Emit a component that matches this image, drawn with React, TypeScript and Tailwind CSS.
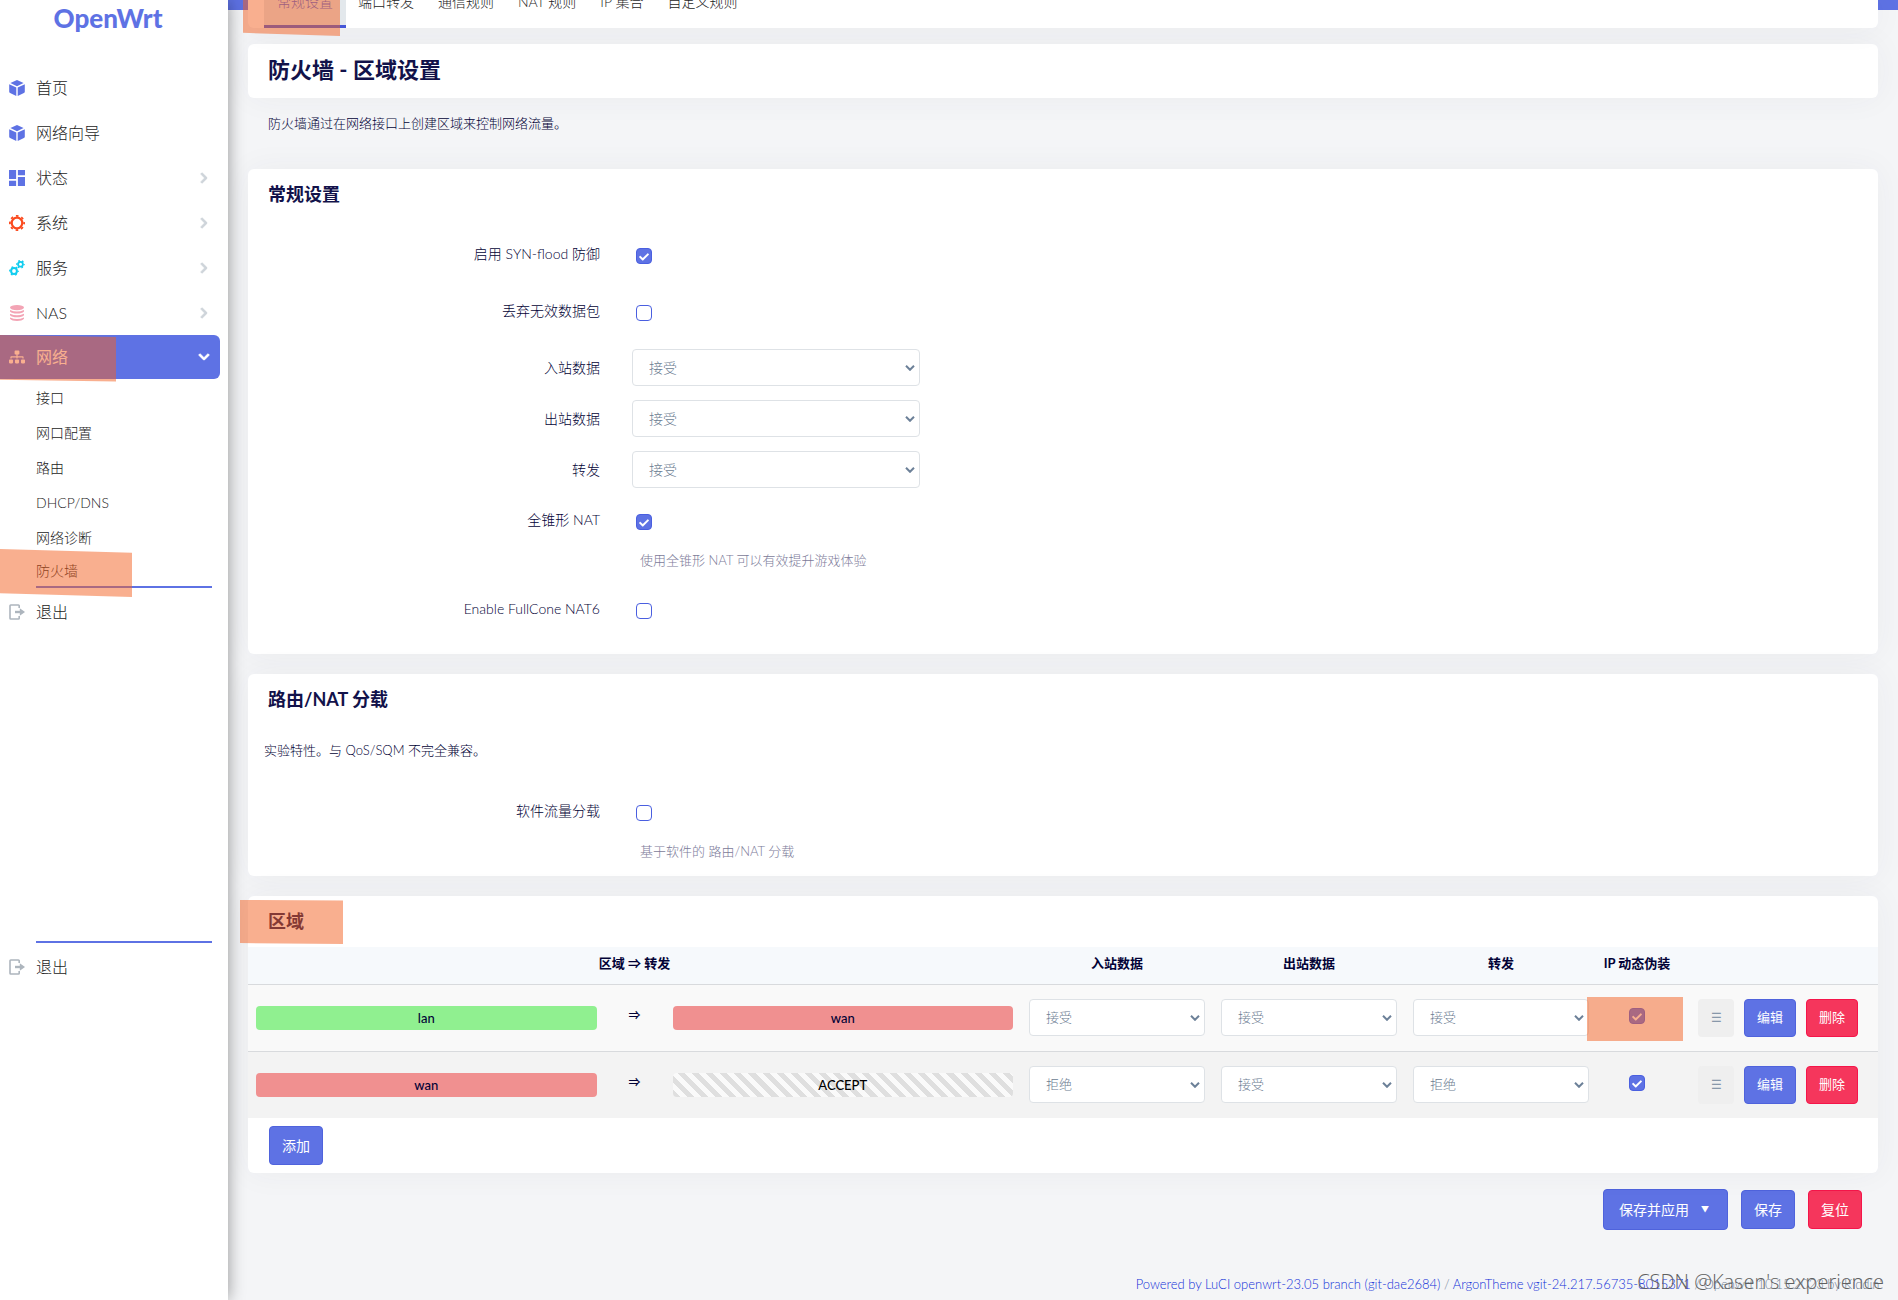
import { ReactNode } from "react";
import { FaCheck, FaChevronDown, FaChevronRight, FaSitemap } from "react-icons/fa";
import { MdDashboard } from "react-icons/md";

function CubeIcon() {
  return (
    <svg viewBox="0 0 16 16" className="size-4 fill-[#5e72e4]">
      <path d="M8 0 14.600 3.100 8 6.300 1.400 3.100z" />
      <path d="M.2 4.200 7.300 7.600V16L1.100 13.100Q.2 12.700.2 11.700z" />
      <path d="M15.800 4.200 8.700 7.600V16l6.200-2.900q.9-.4.9-1.400z" />
    </svg>
  );
}

function GearIcon() {
  return (
    <svg viewBox="0 0 16 16" className="size-4 fill-none stroke-[#fb4a1e]">
      <circle cx="8" cy="8" r="5.300" strokeWidth="2.200" />
      <circle cx="8" cy="8" r="7.100" strokeWidth="1.800" strokeDasharray="2.600 2.976" strokeDashoffset="1.300" />
    </svg>
  );
}

function GearsIcon() {
  return (
    <svg viewBox="0 0 16 16" className="size-4 fill-none stroke-[#11cdef]">
      <circle cx="5" cy="11" r="2.900" strokeWidth="2" />
      <circle cx="5" cy="11" r="4.200" strokeWidth="1.400" strokeDasharray="1.800 2.598" strokeDashoffset="0.900" />
      <circle cx="11.500" cy="4.300" r="2.400" strokeWidth="1.800" />
      <circle cx="11.500" cy="4.300" r="3.600" strokeWidth="1.400" strokeDasharray="1.600 2.170" strokeDashoffset="0.800" />
    </svg>
  );
}

function DisksIcon() {
  return (
    <svg viewBox="0 0 16 16" className="size-4 fill-[#f3a4b5]">
      <ellipse cx="8" cy="2.600" rx="7" ry="2.600" />
      <path d="M1 5q7 3 14 0v1.500q-2 2-7 2t-7-2z" />
      <path d="M1 8.700q7 3 14 0v1.500q-2 2-7 2t-7-2z" />
      <path d="M1 12.400q7 3 14 0v1.400q-2 2.200-7 2.200t-7-2.200z" />
    </svg>
  );
}

function LogoutIcon() {
  return (
    <svg viewBox="0 0 16 16" className="size-4 fill-none stroke-[#adb5bd]">
      <path d="M10.200 4V1.800Q10.200 1 9.400 1H1.800Q1 1 1 1.800v12.400q0 .8.8.8h7.600q.8 0 .8-.8V12" strokeWidth="1.600" />
      <path d="M6 8h5" strokeWidth="2.400" />
      <path d="M10.800 4.200 16 8l-5.200 3.800z" className="fill-[#adb5bd] stroke-none" />
    </svg>
  );
}

// translucent marker stroke, slightly skewed like a hand drawn one
function Marker({ className, points }: { className: string; points: string }) {
  return (
    <svg
      viewBox="0 0 100 100"
      preserveAspectRatio="none"
      aria-hidden="true"
      className={`pointer-events-none absolute z-30 fill-[#f35f1f]/50 ${className}`}
    >
      <polygon points={points} />
    </svg>
  );
}

const menu: { label: string; icon: ReactNode; expandable?: boolean }[] = [
  { label: "首页", icon: <CubeIcon /> },
  { label: "网络向导", icon: <CubeIcon /> },
  {
    label: "状态",
    icon: <MdDashboard viewBox="3 3 18 18" className="size-4 text-[#5e72e4]" />,
    expandable: true,
  },
  { label: "系统", icon: <GearIcon />, expandable: true },
  { label: "服务", icon: <GearsIcon />, expandable: true },
  { label: "NAS", icon: <DisksIcon />, expandable: true },
];

const submenu = ["接口", "网口配置", "路由", "DHCP/DNS", "网络诊断", "防火墙"];

const tabs = ["常规设置", "端口转发", "通信规则", "NAT 规则", "IP 集合", "自定义规则"];

const policies = ["接受", "拒绝", "丢弃"];

const zones = [
  {
    name: "lan",
    color: "bg-[#90f090]",
    target: "wan",
    targetColor: "bg-[#f09090]",
    rowColor: "bg-[#f9f9f9]",
    input: "接受",
    output: "接受",
    forward: "接受",
    marked: true,
  },
  {
    name: "wan",
    color: "bg-[#f09090]",
    target: "ACCEPT",
    targetColor:
      "text-black bg-[repeating-linear-gradient(45deg,#dfdfdf_0,#dfdfdf_5px,#fafafa_5px,#fafafa_10px)]",
    rowColor: "bg-[#f3f3f3]",
    input: "拒绝",
    output: "接受",
    forward: "拒绝",
    marked: false,
  },
];

function LogoutLink() {
  return (
    <a href="#logout" className="flex h-11 items-center gap-[11px] pl-[9px] text-base">
      <LogoutIcon />
      <span>退出</span>
    </a>
  );
}

function Sidebar() {
  return (
    <aside className="relative z-20 w-57 shrink-0 bg-white text-[#1c1c1c] shadow-[0_0_16px_rgba(0,0,0,0.4)]">
      <a
        href="#home"
        className="flex h-16 justify-center pr-3 text-[26px] leading-9 font-black text-[#5e72e4]"
      >
        OpenWrt
      </a>
      <ul className="mt-0.5">
        {menu.map((item) => (
          <li key={item.label}>
            <a href="#menu" className="mb-px flex h-11 items-center gap-[11px] pr-[18px] pl-[9px] text-base">
              {item.icon}
              <span className="grow">{item.label}</span>
              {item.expandable && (
                <FaChevronRight className="size-3 stroke-[#ced4da] stroke-[40px] text-[#ced4da]" />
              )}
            </a>
          </li>
        ))}
        <li className="-mt-px">
          <a
            href="#network"
            className="relative mr-2 flex h-11 items-center gap-[11px] rounded-r-md bg-[#5e72e4] pr-2.5 pl-[9px] text-base font-normal text-white"
          >
            <FaSitemap className="size-4" />
            <span className="grow">网络</span>
            <FaChevronDown className="size-3 stroke-white stroke-[40px]" />
            <Marker className="top-0 left-0 h-12 w-29" points="0,0 100,4 100,97 0,93" />
          </a>
          <ul className="pt-px">
            {submenu.map((label) => (
              <li key={label} className="relative pr-4 pl-9">
                <a
                  href="#sub"
                  className={
                    label === "防火墙"
                      ? "mb-0.5 flex h-[33px] items-center border-b-2 border-[#5e72e4] text-sm"
                      : "flex h-[35px] items-center text-sm"
                  }
                >
                  {label}
                </a>
                {label === "防火墙" && (
                  <Marker className="-top-1.5 left-0 h-12 w-33" points="0,0 100,8 100,100 0,92" />
                )}
              </li>
            ))}
          </ul>
        </li>
      </ul>
      <LogoutLink />
      <div className="mt-[307px] mr-4 ml-9 border-b-2 border-[#5e72e4]" />
      <div className="pt-0.5">
        <LogoutLink />
      </div>
    </aside>
  );
}

function Checkbox({ id, checked, label }: { id: string; checked?: boolean; label?: string }) {
  return (
    <span className="relative block size-4">
      <input
        id={id}
        type="checkbox"
        aria-label={label}
        defaultChecked={checked}
        className="peer block size-4 appearance-none rounded border border-[#4a5fe0] bg-white checked:bg-[#5e72e4]"
      />
      <FaCheck className="pointer-events-none absolute top-1 left-[3px] hidden size-2.5 text-white peer-checked:block" />
    </span>
  );
}

function Select({ id, value, label, small }: { id: string; value: string; label?: string; small?: boolean }) {
  return (
    <span className="relative block">
      <select
        id={id}
        aria-label={label}
        defaultValue={value}
        className={`block h-[37px] w-full appearance-none rounded border border-[#dee2e6] bg-white pr-6 pl-4 text-[#6b7c91] ${small ? "text-[13px]" : "text-sm"}`}
      >
        {policies.map((policy) => (
          <option key={policy}>{policy}</option>
        ))}
      </select>
      <svg
        viewBox="0 0 10 6"
        className="pointer-events-none absolute top-4 right-[5px] h-1.5 w-2.5 fill-none stroke-[#6c8098] stroke-2"
      >
        <path d="m1 .8 4 4 4-4" />
      </svg>
    </span>
  );
}

function CheckRow({ id, label, checked, hint }: { id: string; label: string; checked?: boolean; hint?: string }) {
  return (
    <div className={hint ? "flex h-[89px]" : "flex h-[57px]"}>
      <label htmlFor={id} className="w-88 pt-4 text-right leading-5">
        {label}
      </label>
      <div className="pt-5 pl-9">
        <Checkbox id={id} checked={checked} />
        {hint && <p className="mt-5 pl-1 text-[13px] leading-5 text-[#7c7b99]">{hint}</p>}
      </div>
    </div>
  );
}

function SelectRow({ id, label, value }: { id: string; label: string; value: string }) {
  return (
    <div className="flex h-[51px] items-center">
      <label htmlFor={id} className="w-88 text-right leading-5">
        {label}
      </label>
      <div className="w-80 pl-8">
        <Select id={id} value={value} />
      </div>
    </div>
  );
}

function Card({ title, children, className = "" }: { title: string; children: ReactNode; className?: string }) {
  return (
    <section className={`rounded-md bg-white shadow-[0_0_32px_rgba(60,60,70,0.05)] ${className}`}>
      <h3 className="h-[51px] px-5 text-lg leading-[50px] font-bold text-[#12124a]">{title}</h3>
      {children}
    </section>
  );
}

function ZoneTable() {
  return (
    <table className="w-full table-fixed text-[13px]">
      <colgroup>
        <col />
        <col className="w-48" />
        <col className="w-48" />
        <col className="w-48" />
        <col className="w-20" />
        <col className="w-[201px]" />
      </colgroup>
      <thead>
        <tr className="h-[37px] border-b border-[#d8dadd] bg-[#f6f9fc]">
          <th className="pb-1">区域 ⇒ 转发</th>
          <th className="pb-1">入站数据</th>
          <th className="pb-1">出站数据</th>
          <th className="pb-1">转发</th>
          <th className="pb-1 whitespace-nowrap">IP 动态伪装</th>
          <th className="pb-1" />
        </tr>
      </thead>
      <tbody>
        {zones.map((zone) => (
          <tr key={zone.name} className={`h-[67px] border-b border-[#d8dadd] last:border-b-0 ${zone.rowColor}`}>
            <td className="px-2">
              <div className="flex text-center leading-6 font-medium">
                <div className={`flex-1 rounded ${zone.color}`}>{zone.name}</div>
                <div className="w-19 text-xs leading-5">⇒</div>
                <div className={`flex-1 rounded ${zone.targetColor}`}>{zone.target}</div>
              </div>
            </td>
            <td className="px-2">
              <Select small id={`${zone.name}-input`} value={zone.input} label="入站数据" />
            </td>
            <td className="px-2">
              <Select small id={`${zone.name}-output`} value={zone.output} label="出站数据" />
            </td>
            <td className="px-2">
              <Select small id={`${zone.name}-forward`} value={zone.forward} label="转发" />
            </td>
            <td className="relative">
              <div className="flex justify-center pb-1">
                <Checkbox id={`${zone.name}-masq`} checked label="IP 动态伪装" />
              </div>
              {zone.marked && (
                <Marker className="top-3 -left-2.5 h-11 w-24" points="0,0 100,0 100,100 0,100" />
              )}
            </td>
            <td>
              <div className="flex justify-end gap-2.5 pr-5">
                <button className="h-[38px] w-9 rounded bg-[#efefef] text-xs text-[#8898aa]">☰</button>
                <button className="h-[38px] w-13 rounded border border-[#4f63dc] bg-[#5e72e4] font-normal text-white">
                  编辑
                </button>
                <button className="h-[38px] w-13 rounded border border-[#f5154a] bg-[#f5365c] font-normal text-white">
                  删除
                </button>
              </div>
            </td>
          </tr>
        ))}
      </tbody>
    </table>
  );
}

export default function App() {
  return (
    <div className="flex min-h-screen bg-[#f4f5f7] font-['Lato','Noto_Sans_CJK_SC',sans-serif] text-sm font-light text-[#020236]">
      <Sidebar />
      <div className="relative min-w-0 grow px-5">
        <div className="absolute inset-x-0 top-0 h-2.5 bg-[#5e72e4]" />
        <nav className="relative flex h-7 items-end overflow-hidden rounded-b-md bg-white px-4 text-[#1c1c1c] shadow-[0_0_32px_rgba(60,60,70,0.05)]">
          {tabs.map((tab, i) => (
            <a
              key={tab}
              href="#tab"
              className={
                i === 0
                  ? "border-b-3 border-[#4557d8] bg-[#e3e8ec] px-[13px] pb-[13px] leading-5 text-[#4a5fe0]"
                  : "px-3 pb-4 leading-5"
              }
            >
              {tab}
            </a>
          ))}
        </nav>
        <Marker className="top-0 left-[15px] h-9 w-[97px]" points="0,0 100,0 100,100 0,91" />

        <main className="flex flex-col">
          <h2 className="mt-4 h-[54px] rounded-md bg-white px-5 text-[22px] leading-[52px] font-bold text-[#12124a] shadow-[0_0_32px_rgba(60,60,70,0.05)]">
            防火墙 - 区域设置
          </h2>
          <p className="mt-[15px] mb-9 px-5 text-[13px] leading-5">防火墙通过在网络接口上创建区域来控制网络流量。</p>

          <Card title="常规设置" className="pb-3.5">
            <form className="pt-2">
              <CheckRow id="syn-flood" label="启用 SYN-flood 防御" checked />
              <CheckRow id="drop-invalid" label="丢弃无效数据包" />
              <div className="-mb-px">
                <SelectRow id="input" label="入站数据" value="接受" />
                <SelectRow id="output" label="出站数据" value="接受" />
                <SelectRow id="forward" label="转发" value="接受" />
              </div>
              <CheckRow id="fullcone" label="全锥形 NAT" checked hint="使用全锥形 NAT 可以有效提升游戏体验" />
              <CheckRow id="fullcone6" label="Enable FullCone NAT6" />
            </form>
          </Card>

          <Card title="路由/NAT 分载" className="mt-5 pb-0.5">
            <p className="px-4 pt-[15px] pb-[25px] text-[13px] leading-5">实验特性。与 QoS/SQM 不完全兼容。</p>
            <CheckRow id="flow-offload" label="软件流量分载" hint="基于软件的 路由/NAT 分载" />
          </Card>

          <div className="relative mt-5">
            <Marker className="top-1 -left-2 h-11 w-[103px]" points="0,0 100,1 100,100 0,98" />
            <Card title="区域">
              <ZoneTable />
              <div className="px-[21px] py-2">
                <button className="h-[39px] w-[54px] rounded border border-[#4f63dc] bg-[#5e72e4] font-normal text-white">
                  添加
                </button>
              </div>
            </Card>
          </div>

          <div className="mt-4 flex items-center justify-end gap-[13px] pr-4 font-normal text-white">
            <button className="flex h-[41px] w-[125px] items-center gap-3 rounded border border-[#4f63dc] bg-[#5e72e4] pl-[15px]">
              保存并应用
              <span className="text-[8px]">▼</span>
            </button>
            <button className="h-[39px] w-[54px] rounded border border-[#4f63dc] bg-[#5e72e4]">保存</button>
            <button className="h-[39px] w-[54px] rounded border border-[#f5154a] bg-[#f5365c]">复位</button>
          </div>
        </main>

        <footer className="relative mt-11 -mr-1 text-right text-[13px] leading-5 text-[#76869a]">
          <a href="#luci" className="text-[#1230d8]">
            Powered by LuCI openwrt-23.05 branch (git-dae2684)
          </a>{" "}
          /{" "}
          <a href="#theme" className="text-[#1230d8]">
            ArgonTheme vgit-24.217.56735-8015371
          </a>{" "}
          / Openwrt 10.15.2023 by Kiddin'
          <span className="absolute -top-1 -right-0.5 font-['Open_Sans',sans-serif] text-xl leading-6 text-[#606060]">
            CSDN @Kasen's experience
          </span>
        </footer>
      </div>
    </div>
  );
}
